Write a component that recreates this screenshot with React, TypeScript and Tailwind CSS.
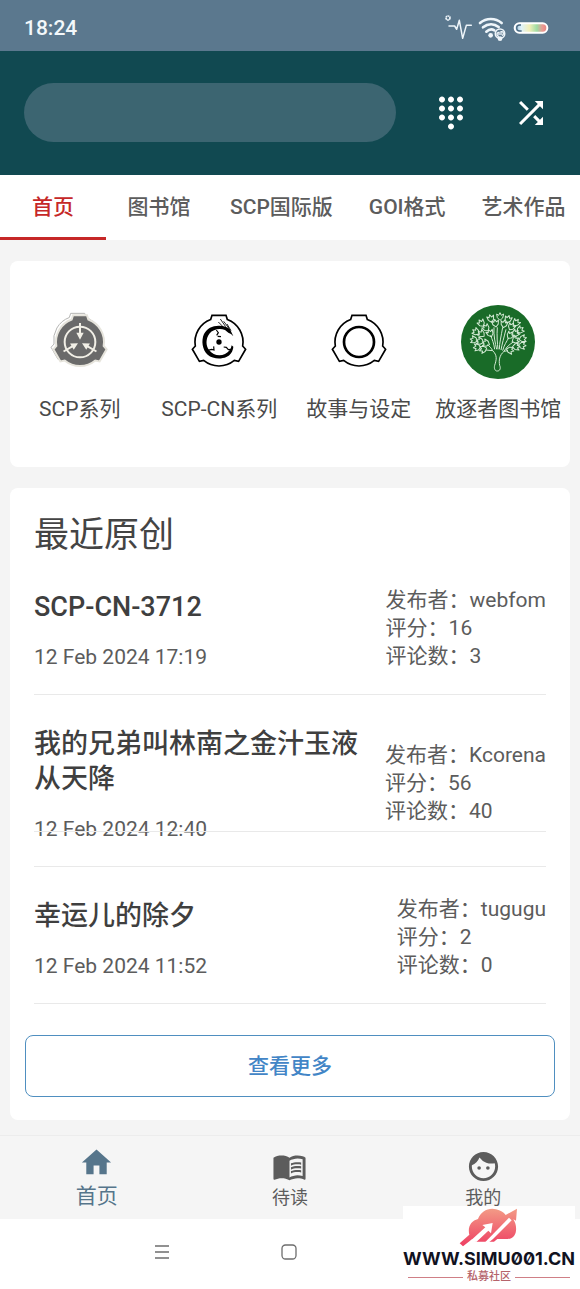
import type { ReactNode } from 'react';
import { MdDialpad, MdFace, MdHome, MdMenuBook, MdShuffle } from 'react-icons/md';

interface Article {
  title: string;
  date: string;
  author: string;
  score: number;
  comments: number;
}

const tabs = ['首页', '图书馆', 'SCP国际版', 'GOI格式', '艺术作品'];

const articles: Article[] = [
  { title: 'SCP-CN-3712', date: '12 Feb 2024 17:19', author: 'webfom', score: 16, comments: 3 },
  { title: '我的兄弟叫林南之金汁玉液从天降', date: '12 Feb 2024 12:40', author: 'Kcorena', score: 56, comments: 40 },
  { title: '幸运儿的除夕', date: '12 Feb 2024 11:52', author: 'tugugu', score: 2, comments: 0 },
];

// outer ring with three tabs, centred on 0,0
const EMBLEM =
  'M-25 -67.5L-21 -80H21L25 -67.5A72 72 0 0 1 71 12.1L79.8 21.8L58.8 58.2L46 55.4A72 72 0 0 1 -46 55.4L-58.8 58.2L-79.8 21.8L-71 12.1A72 72 0 0 1 -25 -67.5Z';

function ScpIcon() {
  return (
    <svg viewBox="-111 -111 222 222" className="size-[74px]">
      <path d={EMBLEM} fill="none" stroke="#b5b5b3" strokeWidth="3" transform="translate(-7 -6)" />
      <path d={EMBLEM} fill="#6a6a6a" stroke="#e6e4dc" strokeWidth="6" />
      <circle r="46" fill="none" stroke="#f1efe6" strokeWidth="6" />
      {[0, 120, 240].map((angle) => (
        <g key={angle} transform={`rotate(${angle})`}>
          <path d="M-3 -57H3V-28H11L0 -7L-11 -28H-3Z" fill="#f1efe6" />
        </g>
      ))}
    </svg>
  );
}

function ScpCnIcon() {
  return (
    <svg viewBox="-111 -111 222 222" className="size-[74px]">
      <path d={EMBLEM} fill="none" stroke="#000" strokeWidth="5" />
      <path d="M43 -17L36 -24L28 -28L18 -36C2 -42 -18 -38 -29 -25C-40 -10 -40 10 -30 24C-18 40 2 44 18 36C30 30 36 22 38 10L43 14C42 28 34 40 22 45C4 53 -20 50 -34 38C-50 24 -54 -4 -45 -24C-36 -42 -18 -50 2 -49C14 -49 26 -45 33 -38Z" />
      <path
        d="M10 -48L-2 -60M20 -46L4 -69M30 -41L14 -62M36 -34L24 -54"
        fill="none"
        stroke="#000"
        strokeWidth="2.5"
      />
      <path
        d="M-34 25L-22 22L-15 24L-16 13M38 22L28 23L22 16L14 15M-8 -36L-2 -28L-7 -20M-4 -17L6 -16"
        fill="none"
        stroke="#000"
        strokeWidth="3.5"
      />
      <circle r="8" />
    </svg>
  );
}

function TalesIcon() {
  return (
    <svg viewBox="-111 -111 222 222" className="size-[74px]">
      <path d={EMBLEM} fill="none" stroke="#000" strokeWidth="5" />
      <circle r="45" fill="none" stroke="#000" strokeWidth="8" />
    </svg>
  );
}

// x, y, rotation of every leaf in the crown
const leaves = [
  [-50, -56, -35], [-22, -70, -15], [6, -76, 0], [30, -68, 15], [54, -58, 35], [-36, -42, -40],
  [-8, -56, -10], [18, -54, 10], [40, -46, 30], [66, -36, 50], [-66, -30, -55], [-50, -24, -50],
  [52, -26, 45], [-72, -6, -75], [-54, -2, -70], [52, -6, 60], [74, -10, 75], [-62, 16, -95],
  [-44, 22, -110], [54, 14, 85], [72, 10, 95], [36, 24, 105], [-36, 4, -70], [-24, -26, -25],
  [36, -20, 35],
];

function LibraryIcon() {
  return (
    <svg viewBox="-111 -111 222 222" className="size-[74px]">
      <circle r="111" fill="#196b28" />
      <g fill="none" stroke="#d3ead4" strokeWidth="3" strokeLinejoin="round">
        {leaves.map(([x, y, angle]) => (
          <path
            key={`${x},${y}`}
            d="M0 11L-8 3L-10 -8L-4 -4L0 -12L4 -4L11 -8L8 4Z"
            transform={`translate(${x} ${y}) rotate(${angle})`}
          />
        ))}
        <path d="M-16 26C-2 40 -4 52 -10 70C-13 80 -8 88 -2 87C6 87 9 79 5 70C2 56 4 40 18 28" />
        <path d="M-16 26L-36 24M-16 26C-20 18 -26 12 -32 8M-10 22C-12 4 -18 -8 -22 -20M-4 22C-8 4 -14 -20 -12 -44M0 22C-2 4 -4 -20 -2 -44M4 22C4 4 10 -20 14 -44M9 24C12 6 18 -14 24 -38M14 26C18 10 26 -2 32 -12M18 28C24 16 36 6 46 0M18 28L30 26" />
      </g>
    </svg>
  );
}

const categories: { label: string; icon: ReactNode }[] = [
  { label: 'SCP系列', icon: <ScpIcon /> },
  { label: 'SCP-CN系列', icon: <ScpCnIcon /> },
  { label: '故事与设定', icon: <TalesIcon /> },
  { label: '放逐者图书馆', icon: <LibraryIcon /> },
];

function StatusIcons() {
  return (
    <svg viewBox="40 0 321 90" className="h-[30px] w-[107px]">
      <defs>
        <linearGradient id="charge" x1="0" x2="1" y1="0" y2="0">
          <stop offset="0" stopColor="#8fb4cf" />
          <stop offset="0.2" stopColor="#dff3fb" />
          <stop offset="0.45" stopColor="#f3f0b8" />
          <stop offset="0.68" stopColor="#9fdca4" />
          <stop offset="0.85" stopColor="#e89a93" />
          <stop offset="1" stopColor="#e9837f" />
        </linearGradient>
      </defs>
      <g fill="none" stroke="#eef5fa" strokeLinecap="round" strokeLinejoin="round">
        <circle cx="55" cy="21" r="6" strokeWidth="5" strokeDasharray="5 1" strokeLinecap="butt" />
        <path d="M58 45H75L81 55L89 28L99 82L110 43H125" strokeWidth="4.5" />
        <path d="M151 36C170 20 197 20 216 36" strokeWidth="8" />
        <path d="M160 49C175 37 193 37 207 48" strokeWidth="8" />
        <path d="M170 62C178 55 187 54 194 58" strokeWidth="8" />
      </g>
      <circle cx="183" cy="73" r="7" fill="#eef5fa" />
      <g stroke="#eef5fa" fill="none" strokeWidth="5">
        <circle cx="211" cy="68" r="14" fill="#5b788e" />
        <path d="M208 76C200 76 200 64 208 64V72M214 72V62C222 60 224 70 217 74" strokeWidth="4" />
      </g>
      <circle cx="211" cy="83" r="7" fill="#eef5fa" />
      <rect x="255" y="37" width="98" height="28" rx="14" fill="url(#charge)" stroke="#fff" strokeWidth="6" />
      <path d="M274 42H270A9 9 0 0 0 270 60H276" fill="none" stroke="#4d6b82" strokeWidth="4" />
    </svg>
  );
}

function ArticleRow({ article }: { article: Article }) {
  return (
    <li className="relative flex items-center justify-between gap-4 border-b border-[#e9e9e9]">
      <div className="pt-8 pb-[23px]">
        <h3 className="text-[27px] leading-[35px] font-medium text-[#3f3f3f]">{article.title}</h3>
        <p className="mt-[18px] text-[21px] leading-7">{article.date}</p>
      </div>
      <div className="shrink-0 pt-1 text-[21px] leading-7">
        <p>发布者：{article.author}</p>
        <p>评分：{article.score}</p>
        <p>评论数：{article.comments}</p>
      </div>
      {/* fixed row rule, crosses the date when the title wraps */}
      <div className="pointer-events-none absolute inset-x-0 top-0 h-[137px] border-b border-[#e9e9e9]" />
    </li>
  );
}

function Watermark() {
  return (
    <div className="absolute right-[5px] bottom-0 flex h-[83px] w-[172px] flex-col items-center bg-white pt-0.5">
      <svg viewBox="208 234 178 117" className="h-[39px] w-[60px] shrink-0">
        <defs>
          <linearGradient id="cloud" x1="0" x2="0" y1="0" y2="1">
            <stop offset="0" stopColor="#f39b86" />
            <stop offset="1" stopColor="#ee3f63" />
          </linearGradient>
        </defs>
        <path
          d="M209 340L238 314C232 290 244 272 264 267C272 244 296 232 318 238C332 241 341 247 347 255L381 236L378 272L370 268C384 290 382 326 352 327H322L312 335H257L246 328L219 349Z"
          fill="url(#cloud)"
        />
        <path d="M240 334L286 292L277 285L308 279L303 310L295 302L259 336Z" fill="#fff" />
        <path d="M286 336L357 263L365 271L309 327L298 336Z" fill="#fff" />
      </svg>
      <p className="font-['Inter',sans-serif] text-[18px] leading-6 font-bold whitespace-nowrap text-[#11121f] slashed-zero">
        WWW.SIMU001.CN
      </p>
      <div className="flex w-full items-center gap-1 px-[5px] text-[11px] leading-3 font-medium text-[#b5636b]">
        <span className="h-px flex-1 bg-[#cf7f86]" />
        私募社区
        <span className="h-px flex-1 bg-[#cf7f86]" />
      </div>
    </div>
  );
}

export default function App() {
  return (
    <div className="relative bg-[#f4f4f4] font-['Roboto','Noto_Sans_CJK_SC',sans-serif] text-[#5c5c5c]">
      <div className="flex h-[51px] items-center justify-between bg-[#5b788e] pr-[30px] pl-6">
        <span className="pt-1 text-[21px] leading-7 font-medium text-[#f3f8fb]">18:24</span>
        <StatusIcons />
      </div>

      <header className="flex items-center bg-[#114951] pt-8 pr-[9px] pb-[33px] pl-6 text-white">
        <input
          type="search"
          aria-label="搜索"
          className="mr-[15px] h-[59px] min-w-0 flex-1 rounded-full bg-[#3c6571] px-6 text-[21px] outline-none"
        />
        <button type="button" aria-label="编号" className="flex w-20 justify-center">
          <MdDialpad size={36} />
        </button>
        <button type="button" aria-label="随机" className="flex w-20 justify-center">
          <MdShuffle size={36} />
        </button>
      </header>

      <nav className="flex h-[65px] overflow-hidden bg-white">
        {tabs.map((tab, i) => (
          <button
            key={tab}
            type="button"
            className={`min-w-[106px] shrink-0 border-b-[3px] px-[18px] pt-px text-[21px] leading-7 font-medium whitespace-nowrap ${
              i === 0 ? 'border-[#c62828] text-[#c62828]' : 'border-transparent'
            }`}
          >
            {tab}
          </button>
        ))}
      </nav>

      <main className="flex flex-col gap-[21px] px-2.5 pt-[21px] pb-[15px]">
        <section className="grid grid-cols-4 rounded-lg bg-white pt-11 pr-0.5 pb-11">
          {categories.map((category) => (
            <a key={category.label} href="#" className="flex flex-col items-center gap-4">
              {category.icon}
              <span className="text-[21px] leading-7 whitespace-nowrap text-[#4a4a4a]">{category.label}</span>
            </a>
          ))}
        </section>

        <section className="rounded-lg bg-white px-[15px] pt-7 pb-[23px]">
          <div className="px-[9px]">
            <h2 className="pb-0.5 text-[35px] leading-10 text-[#444]">最近原创</h2>
            <ul>
              {articles.map((article) => (
                <ArticleRow key={article.title} article={article} />
              ))}
            </ul>
          </div>
          <button
            type="button"
            className="mt-[31px] h-[62px] w-full rounded-lg border border-[#4f8fc0] pt-0.5 text-[21px] font-medium text-[#4285c6]"
          >
            查看更多
          </button>
        </section>
      </main>

      <nav className="grid h-[84px] grid-cols-3 border-t border-[#ececec] bg-[#f5f5f5]">
        <a href="#" className="flex flex-col items-center gap-0.5 pt-[9px] text-[21px] leading-7 text-[#56758b]">
          <MdHome size={35} />
          首页
        </a>
        <a href="#" className="flex flex-col items-center pt-[13px] text-[18px] leading-7">
          <MdMenuBook size={35} />
          待读
        </a>
        <a href="#" className="flex flex-col items-center pt-[13px] text-[18px] leading-7">
          <MdFace size={35} />
          我的
        </a>
      </nav>

      <div className="flex h-[70px] items-center justify-center gap-[111px] bg-white pr-[129px] pb-1 text-[#6d6d6d]">
        <button type="button" aria-label="菜单">
          <svg viewBox="0 0 16 16" className="size-4" fill="none" stroke="currentColor" strokeWidth="1.3">
            <path d="M1 2H15M1 8H15M1 14H15" />
          </svg>
        </button>
        <button type="button" aria-label="主屏幕">
          <svg viewBox="0 0 16 16" className="size-4" fill="none" stroke="currentColor" strokeWidth="1.3">
            <rect x="1" y="1" width="14" height="14" rx="3.5" />
          </svg>
        </button>
      </div>

      <Watermark />
    </div>
  );
}
